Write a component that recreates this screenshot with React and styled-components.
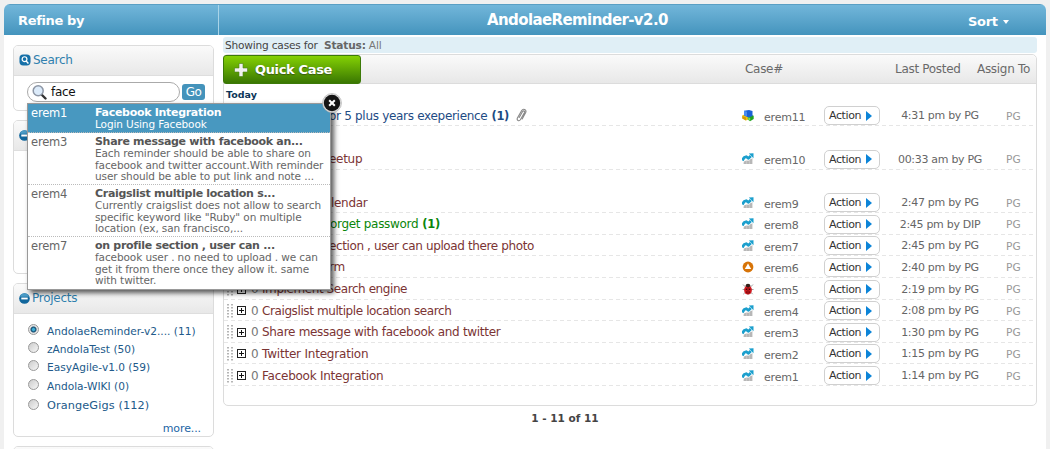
import React from 'react';
import styled, { createGlobalStyle } from 'styled-components';

const Global = createGlobalStyle`
  * { box-sizing: border-box; }
  html, body { margin: 0; height: 449px; overflow: hidden; background: #f0f0f0; }
  body { font-family: Verdana, "DejaVu Sans", sans-serif; font-size: 11px; color: #666; }
`;

const Page = styled.div`
  width: 1042px; height: 445px; margin: 4px 4px 0 4px; background: #fff;
  border-radius: 6px 6px 0 0; display: flex; flex-direction: column; overflow: hidden;
`;
const TopBar = styled.header`
  display: flex; flex: none; height: 31px; color: #fff; font-weight: bold;
  background: linear-gradient(#72b6da, #4494bd);
  border-top: 1px solid #5a9fc4;
`;
const TopLeft = styled.div`
  width: 215px; border-right: 1px solid #a9d4e8; padding-left: 14px;
  font-size: 13px; line-height: 31px; letter-spacing: -0.35px;
`;
const TopTitle = styled.h1`
  margin: 0; flex: 1; padding-left: 268px; font-size: 15px; line-height: 31px; letter-spacing: -0.6px; white-space: nowrap;
`;
const SortMenu = styled.div`
  display: flex; align-items: center; gap: 5px; width: 78px; padding-top: 3px; font-size: 13px; letter-spacing: -0.3px;
`;
const Caret = styled.i`
  border: 3.5px solid transparent; border-top: 4px solid #fff; border-bottom: 0; margin-top: 1px;
`;
const Columns = styled.div`
  display: flex; flex: 1; min-height: 0;
`;

const Sidebar = styled.aside`
  width: 219px; padding: 10px 9px 0 9px; display: flex; flex-direction: column; gap: 9px; flex: none;
`;
const Card = styled.section`
  position: relative; flex: none; width: 201px; height: ${p => p.$height}px;
  border: 1px solid #dcdcdc; border-radius: 5px; background: #fff;
`;
const CardHead = styled.div`
  display: flex; align-items: center; gap: 2px; height: 30px; padding: 0 0 1px 5px;
  color: #2f7fae; font-size: 12px; letter-spacing: -0.25px;
  background: linear-gradient(#fafafa, #e8e8e8); border-bottom: 1px solid #dedede; border-radius: 4px 4px 0 0;
`;
const SearchForm = styled.div`
  display: flex; gap: 2px; padding: 6px 0 0 13px;
`;
const SearchBox = styled.div`
  display: flex; align-items: center; gap: 4px; width: 153px; height: 20px; padding-left: 4px;
  border: 1px solid #aaa; border-radius: 10px; color: #111; font-size: 12px; letter-spacing: -0.3px;
`;
const GoButton = styled.button`
  width: 23px; height: 16px; margin-top: 2px; padding: 0; border: 0; border-radius: 3px; background: #4493bb;
  color: #fff; font-family: inherit; font-size: 12px; line-height: 16px; letter-spacing: -0.5px;
`;
const ProjectList = styled.div`
  padding: 6px 0 0 14px;
`;
const Project = styled.div`
  display: flex; align-items: center; gap: 8px; height: ${p => p.$height}px;
  font-size: ${p => p.$size || 10.6}px; color: #225a8a; white-space: nowrap; letter-spacing: ${p => p.$size ? 0.1 : 0}px;
`;
const ProjectName = styled.span`
  padding-top: 3px;
`;
const Radio = styled.span`
  flex: none; width: 11px; height: 11px; border-radius: 50%; border: 1px solid #999;
  background: ${p => p.$on ? 'radial-gradient(circle, #3fb0d8 0 1px, #14476b 2.5px, #e4e4e4 3.5px)' : 'linear-gradient(135deg, #ccc, #f6f6f6)'};
`;
const More = styled.div`
  text-align: right; padding: 8px 12px 0 0; color: #2265a5; font-size: 11px; letter-spacing: -0.1px;
`;

const Main = styled.main`
  width: 814px; padding-top: 2px; flex: none;
`;
const StatusBar = styled.div`
  height: 16px; padding-left: 2px; border-radius: 3px; background: #e0eff6; color: #444; white-space: pre;
  font-size: 10.6px; line-height: 16px; letter-spacing: -0.2px;
  b { color: #666; } span { color: #777; }
`;
const CaseCard = styled.section`
  margin-top: 1px; height: 352px; border: 1px solid #dcdcdc; border-radius: 5px;
`;
const CaseHead = styled.div`
  display: grid; grid-template-columns: 521px 150px 82px 1fr; align-items: center; height: 29px;
  background: linear-gradient(#fafafa, #e8e8e8); border-bottom: 1px solid #dcdcdc;
  font-size: 12px; letter-spacing: -0.3px; white-space: nowrap; color: #6a6a6a; border-radius: 5px 5px 0 0;
  & > span { padding-bottom: 1px; }
`;
const QuickCase = styled.button`
  display: flex; align-items: center; gap: 7px; width: 138px; height: 29px; margin-left: -1px; padding: 0 0 0 10px;
  border: 1px solid #3c7a08; border-radius: 3px; background: linear-gradient(#84d104, #3a7702); color: #fff;
  font-family: inherit; font-size: 13px; font-weight: bold; letter-spacing: -0.35px; text-shadow: 0 1px 1px #3a5a10; white-space: nowrap;
`;
const Today = styled.div`
  height: 20px; padding-left: 2px; line-height: 21px; color: #0b3558; font-weight: bold; font-size: 9.5px; letter-spacing: 0;
`;
const CaseRow = styled.div`
  display: grid; grid-template-columns: 11px 14px 11px 480px 22px 60px 57px 118px 1fr; align-items: end;
  height: ${p => p.$height}px; padding: 0 0 0 2px; white-space: nowrap;
  background: repeating-linear-gradient(90deg, #e6e6e6 0 4px, transparent 4px 7px) 0 100% / 100% 1px no-repeat;
`;
const Cell = styled.span`
  display: flex; align-items: center; height: 21px;
`;
const Count = styled(Cell)`
  font-size: 12px; color: #777;
`;
const Title = styled(Cell)`
  font-size: 12px; letter-spacing: ${p => p.$spacing || -0.3}px; color: ${p => p.$color}; white-space: pre;
  padding-left: ${p => p.$indent || 0}px;
  b { margin-left: 4px; font-size: 11.5px; }
  svg { margin-left: 7px; }
`;
const CaseId = styled(Cell)`
  font-size: 11px; padding-top: 3px; letter-spacing: -0.2px; color: #666;
`;
const ActionButton = styled.button`
  display: flex; align-items: center; gap: 5px; width: 56px; height: 19px; margin: 0 0 1px; padding: 0 0 0 4px;
  border: 1px solid #d0d0d0; border-radius: 5px; background: #fff; color: #333; font-family: inherit;
  font-size: 11px; letter-spacing: -0.4px;
`;
const Arrow = styled.i`
  border: 5px solid transparent; border-left: 6px solid #0b84d8; border-right: 0;
`;
const Posted = styled(Cell)`
  justify-content: center; font-size: 11px; letter-spacing: -0.3px;
`;
const Assign = styled(Cell)`
  padding-left: 7px; font-size: 10.6px; color: #999;
`;
const Pager = styled.div`
  text-align: center; padding-top: 6px; margin-left: -130px; color: #444; font-weight: bold; font-size: 10.5px;
`;

const Popup = styled.div`
  position: absolute; z-index: 5; left: 13px; top: 57px; width: 304px; height: 187px;
  background: #fff; border: 1px solid #999; box-shadow: 3px 3px 5px rgba(0,0,0,.65);
`;
const Close = styled.div`
  position: absolute; right: -12px; top: -11px; height: 20px; svg { display: block; }
`;
const Hit = styled.div`
  display: flex; height: ${p => p.$height}px; padding: 2px 0 0 3px; border-bottom: ${p => p.$last ? 0 : '1px dotted #bbb'};
  background: ${p => p.$active ? '#4898c0' : '#fff'}; color: ${p => p.$active ? '#fff' : '#666'};
`;
const HitId = styled.div`
  width: 64px; font-size: 11.5px; line-height: 14px; letter-spacing: -0.2px;
`;
const HitText = styled.div`
  white-space: pre; font-size: 10.5px; line-height: 11.7px; letter-spacing: -0.1px;
  b { display: block; font-size: 11px; line-height: 13px; letter-spacing: -0.3px; color: ${p => p.$active ? '#fff' : '#555'}; }
`;

const Handle = () => (
  <svg width="8" height="14" viewBox="0 0 8 14" fill="#b5b5b5">
    {[0, 3, 6, 9, 12].map(y => <g key={y}><rect x="1" y={y} width="2" height="1.5" /><rect x="5" y={y} width="2" height="1.5" /></g>)}
  </svg>
);
const Expand = () => (
  <svg width="9" height="9" viewBox="0 0 9 9"><rect x=".5" y=".5" width="8" height="8" fill="#fff" stroke="#222" /><path d="M2 4.5h5M4.5 2v5" stroke="#111" /></svg>
);
const ChartIcon = () => (
  <svg width="12" height="12" viewBox="0 0 12 12">
    <path d="M1.5 9.500L4 7.500h3L10.500 5v6h-9z" fill="#c6c6c6" /><path d="M3 8v3M6 8v3M9 6v5" stroke="#a8a8a8" />
    <path d="M.3 7.500L2.200 4.500l2-.8 2.300 1.600L8.800 3" fill="none" stroke="#1b9fcd" strokeWidth="2.800" strokeLinejoin="round" /><path d="M6.800 .5l4.700-.3V5.200z" fill="#1b9fcd" />
  </svg>
);
const CubesIcon = () => (
  <svg width="12" height="12" viewBox="0 0 12 12">
    <path d="M.3 5.200l2.500-.8L6 6v3.500L4 10.500.3 8.600z" fill="#f2c40f" /><path d="M.3 6l3.700 1.600v3L.3 8.600z" fill="#d49a05" />
    <path d="M6 6.500l3-1.800 2.700 1V9L8 11.200 5.700 9.500z" fill="#22a322" /><path d="M6.200 7l2 1v2.800l-2-1z" fill="#7ed957" />
    <path d="M2 .8L7 0l3.500 1v5L6.500 7.500 2 5.500z" fill="#1c62d6" /><path d="M2 .8l3 1v4.800l-3-1.300z" fill="#4b8cf0" />
  </svg>
);
const WarnIcon = () => (
  <svg width="12" height="12" viewBox="0 0 12 12"><circle cx="6" cy="6" r="5.400" fill="#d77408" /><path d="M6 2.500l3.200 5.600H2.800z" fill="#fff" /></svg>
);
const BugIcon = () => (
  <svg width="12" height="12" viewBox="0 0 12 12">
    <path d="M1 1.500l3 3M11 1.500l-3 3M.6 6.500h11M1.300 11.200L4 8.500M10.700 11.200L8 8.500" stroke="#888" strokeWidth=".8" />
    <ellipse cx="6" cy="7" rx="3.900" ry="4.500" fill="#cf1a20" /><ellipse cx="6" cy="2.500" rx="2.300" ry="1.700" fill="#33201a" />
    <path d="M6 3.500v8" stroke="#4a0808" strokeWidth=".6" /><circle cx="4.400" cy="6.200" r=".7" fill="#300" /><circle cx="7.600" cy="6.200" r=".7" fill="#300" /><circle cx="4.600" cy="9" r=".6" fill="#300" /><circle cx="7.400" cy="9" r=".6" fill="#300" />
  </svg>
);
const kinds = { chart: ChartIcon, cubes: CubesIcon, warn: WarnIcon, bug: BugIcon };

const SearchBadge = () => (
  <svg width="12" height="12" viewBox="0 0 13 13"><rect x=".5" y=".5" width="12" height="12" rx="4" fill="#1670a8" /><circle cx="6" cy="5.600" r="2.600" fill="none" stroke="#fff" strokeWidth="1.300" /><path d="M7.800 7.600l2.400 2.600" stroke="#fff" strokeWidth="1.500" /></svg>
);
const MinusBadge = () => (
  <svg width="11" height="11" viewBox="0 0 12 12"><circle cx="6" cy="6" r="5.800" fill="#12679d" /><path d="M1.200 4a5 5 0 0 1 9.600 0z" fill="#4b9bc6" /><path d="M2.500 6h7" stroke="#fff" strokeWidth="2" /></svg>
);
const Lens = () => (
  <svg width="15" height="16" viewBox="0 0 15 16"><path d="M9.500 10.500l4 4" stroke="#333" strokeWidth="2.400" strokeLinecap="round" /><circle cx="6.200" cy="6.700" r="5" fill="#dcebfa" stroke="#8d96a5" strokeWidth="1.500" /></svg>
);
const Plus = () => (
  <svg width="14" height="14" viewBox="0 0 14 14"><path d="M5 .5h4V5h4.500v4H9v4.500H5V9H.5V5H5z" fill="#f1f1f1" stroke="#4a7f18" strokeWidth=".6" /></svg>
);
const Clip = () => (
  <svg width="11" height="15" viewBox="0 0 11 15" fill="none" stroke="#888" strokeWidth="1.100" strokeLinecap="round"><path d="M3.200 9.500L6.600 3.600c.9-1.300 2.600-.4 1.900 1L4.400 11.800c-1.300 1.800-4 .5-3-1.700L5.700 2.500c1.500-2.600 5.200-.7 4 2L6.200 11" /></svg>
);
const CloseIcon = () => (
  <svg width="20" height="20" viewBox="0 0 20 20"><circle cx="10" cy="10" r="9.500" fill="#ddd" stroke="#aaa" strokeWidth=".6" /><circle cx="10" cy="10" r="8.200" fill="#151515" /><path d="M7.200 7.200l5.600 5.600M12.800 7.200l-5.600 5.600" stroke="#fff" strokeWidth="2" /></svg>
);

const maroon = '#7b3434';
const cases = [
  { id: 'erem11', indent: 67, title: 'or 5 plus years exeperience', n: '(1)', clip: true, color: '#1d4b84', kind: 'cubes', time: '4:31 pm by PG', h: 22 },
  { id: 'erem10', indent: 67, title: 'eetup', kind: 'chart', time: '00:33 am by PG', h: 43.5 },
  { id: 'erem9', indent: 69, title: 'lendar', kind: 'chart', time: '2:47 pm by PG', h: 43.5 },
  { id: 'erem8', indent: 68, title: 'orget password', n: '(1)', color: '#0a860a', kind: 'chart', time: '2:45 pm by DIP' },
  { id: 'erem7', indent: 67, title: 'ection , user can upload there photo', kind: 'chart', time: '2:45 pm by PG', spacing: -0.38 },
  { id: 'erem6', indent: 67, title: 'rm', kind: 'warn', time: '2:40 pm by PG' },
  { id: 'erem5', title: 'Implement Search engine', kind: 'bug', time: '2:19 pm by PG', spacing: -0.42 },
  { id: 'erem4', title: 'Craigslist multiple location search', kind: 'chart', time: '2:08 pm by PG', spacing: -0.4 },
  { id: 'erem3', title: 'Share message with facebook and twitter', kind: 'chart', time: '1:30 pm by PG', spacing: -0.3 },
  { id: 'erem2', title: 'Twitter Integration', kind: 'chart', time: '1:15 pm by PG', spacing: -0.2 },
  { id: 'erem1', title: 'Facebook Integration', kind: 'chart', time: '1:14 pm by PG', spacing: -0.25 },
];
const projects = [
  ['AndolaeReminder-v2.... (11)', 18], ['zAndolaTest (50)', 18], ['EasyAgile-v1.0 (59)', 18], ['Andola-WIKI (0)', 20], ['OrangeGigs (112)', 20],
];
const hits = [
  { id: 'erem1', title: 'Facebook Integration', text: 'Login Using Facebook', h: 29 },
  { id: 'erem3', title: 'Share message with facebook an...', text: 'Each reminder should be able to share on\nfacebook and twitter account.With reminder\nuser should be able to put link and note ...', h: 52 },
  { id: 'erem4', title: 'Craigslist multiple location s...', text: 'Currently craigslist does not allow to search\nspecific keyword like "Ruby" on multiple\nlocation (ex, san francisco,...', h: 52 },
  { id: 'erem7', title: 'on profile section , user can ...', text: 'facebook user . no need to upload . we can\nget it from there once they allow it. same\nwith twitter.', h: 51 },
];

export default function App() {
  return (
    <>
      <Global />
      <Page>
        <TopBar>
          <TopLeft>Refine by</TopLeft>
          <TopTitle>AndolaeReminder-v2.0</TopTitle>
          <SortMenu>Sort <Caret /></SortMenu>
        </TopBar>
        <Columns>
          <Sidebar>
            <Card $height={66}>
              <CardHead><SearchBadge />Search</CardHead>
              <SearchForm>
                <SearchBox><Lens />face</SearchBox>
                <GoButton>Go</GoButton>
              </SearchForm>
              <Popup>
                {hits.map((h, i) => (
                  <Hit key={h.id} $height={h.h} $active={i === 0} $last={i === hits.length - 1}>
                    <HitId>{h.id}</HitId>
                    <HitText $active={i === 0}><b>{h.title}</b>{h.text}</HitText>
                  </Hit>
                ))}
                <Close><CloseIcon /></Close>
              </Popup>
            </Card>
            <Card $height={154}><CardHead><MinusBadge /></CardHead></Card>
            <Card $height={154}>
              <CardHead><MinusBadge />Projects</CardHead>
              <ProjectList>
                {projects.map(([name, h], i) => (
                  <Project key={name} $height={h} $size={i === 4 ? 11.3 : 0}>
                    <Radio $on={i === 0} /><ProjectName>{name}</ProjectName>
                  </Project>
                ))}
              </ProjectList>
              <More>more...</More>
            </Card>
            <Card $height={60}><CardHead /></Card>
          </Sidebar>
          <Main>
            <StatusBar>Showing cases for  <b>Status:</b> <span>All</span></StatusBar>
            <CaseCard>
              <CaseHead>
                <QuickCase><Plus />Quick Case</QuickCase>
                <span>Case#</span><span>Last Posted</span><span>Assign To</span>
              </CaseHead>
              <Today>Today</Today>
              {cases.map(c => {
                const Kind = kinds[c.kind];
                return (
                  <CaseRow key={c.id} $height={c.h || 21.625}>
                    <Cell><Handle /></Cell>
                    <Cell><Expand /></Cell>
                    <Count>{!c.indent && '0'}</Count>
                    <Title $color={c.color || maroon} $indent={c.indent} $spacing={c.spacing}>{c.title}{c.n && <b>{c.n}</b>}{c.clip && <Clip />}</Title>
                    <Cell><Kind /></Cell>
                    <CaseId>{c.id}</CaseId>
                    <ActionButton>Action<Arrow /></ActionButton>
                    <Posted>{c.time}</Posted>
                    <Assign>PG</Assign>
                  </CaseRow>
                );
              })}
            </CaseCard>
            <Pager>1 - 11 of 11</Pager>
          </Main>
        </Columns>
      </Page>
    </>
  );
}
